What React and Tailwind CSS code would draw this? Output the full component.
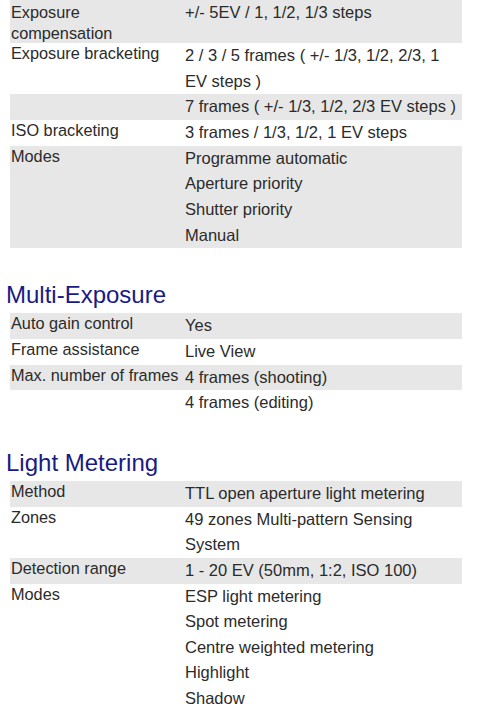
const exposure = [
  { label: ["Exposure", "compensation"], values: ["+/- 5EV / 1, 1/2, 1/3 steps"], gray: true, first: true },
  { label: ["Exposure bracketing"], values: ["2 / 3 / 5 frames ( +/- 1/3, 1/2, 2/3, 1", "EV steps )"] },
  { label: [], values: ["7 frames ( +/- 1/3, 1/2, 2/3 EV steps )"], gray: true },
  { label: ["ISO bracketing"], values: ["3 frames / 1/3, 1/2, 1 EV steps"] },
  { label: ["Modes"], values: ["Programme automatic", "Aperture priority", "Shutter priority", "Manual"], gray: true },
];

const multi = [
  { label: ["Auto gain control"], values: ["Yes"], gray: true },
  { label: ["Frame assistance"], values: ["Live View"] },
  { label: ["Max. number of frames"], values: ["4 frames (shooting)"], gray: true },
  { label: [], values: ["4 frames (editing)"] },
];

const metering = [
  { label: ["Method"], values: ["TTL open aperture light metering"], gray: true },
  { label: ["Zones"], values: ["49 zones Multi-pattern Sensing", "System"] },
  { label: ["Detection range"], values: ["1 - 20 EV (50mm, 1:2, ISO 100)"], gray: true },
  { label: ["Modes"], values: ["ESP light metering", "Spot metering", "Centre weighted metering", "Highlight", "Shadow"] },
];

function SpecTable({ rows }) {
  return (
    <div className="w-[452px] ml-[10px]">
      {rows.map((row, i) => (
        <div key={i} className={"flex " + (row.gray ? "bg-[#e7e7e7]" : "bg-white")}>
          <div className={"w-[174px] shrink-0 pl-px text-[16.3px] leading-[20.5px] whitespace-nowrap " + (row.first ? "pt-[2px]" : "")}>
            {row.label.map((l, j) => (
              <div key={j}>{l}</div>
            ))}
          </div>
          <div className="pl-px text-[16.5px] leading-[25.65px] whitespace-nowrap">
            {row.values.map((v, j) => (
              <div key={j}>{v}</div>
            ))}
          </div>
        </div>
      ))}
    </div>
  );
}

function Heading({ children }) {
  return (
    <h2 className="ml-[6px] mt-[33px] mb-[4px] text-[24px] leading-[28px] text-[#1a1a85]">
      {children}
    </h2>
  );
}

export default function App() {
  return (
    <div className="w-[484px] h-[708px] overflow-hidden bg-white text-[#2b2b2b] font-['Liberation_Sans',Arial,sans-serif]">
      <SpecTable rows={exposure} />
      <Heading>Multi-Exposure</Heading>
      <SpecTable rows={multi} />
      <Heading>Light Metering</Heading>
      <SpecTable rows={metering} />
    </div>
  );
}
